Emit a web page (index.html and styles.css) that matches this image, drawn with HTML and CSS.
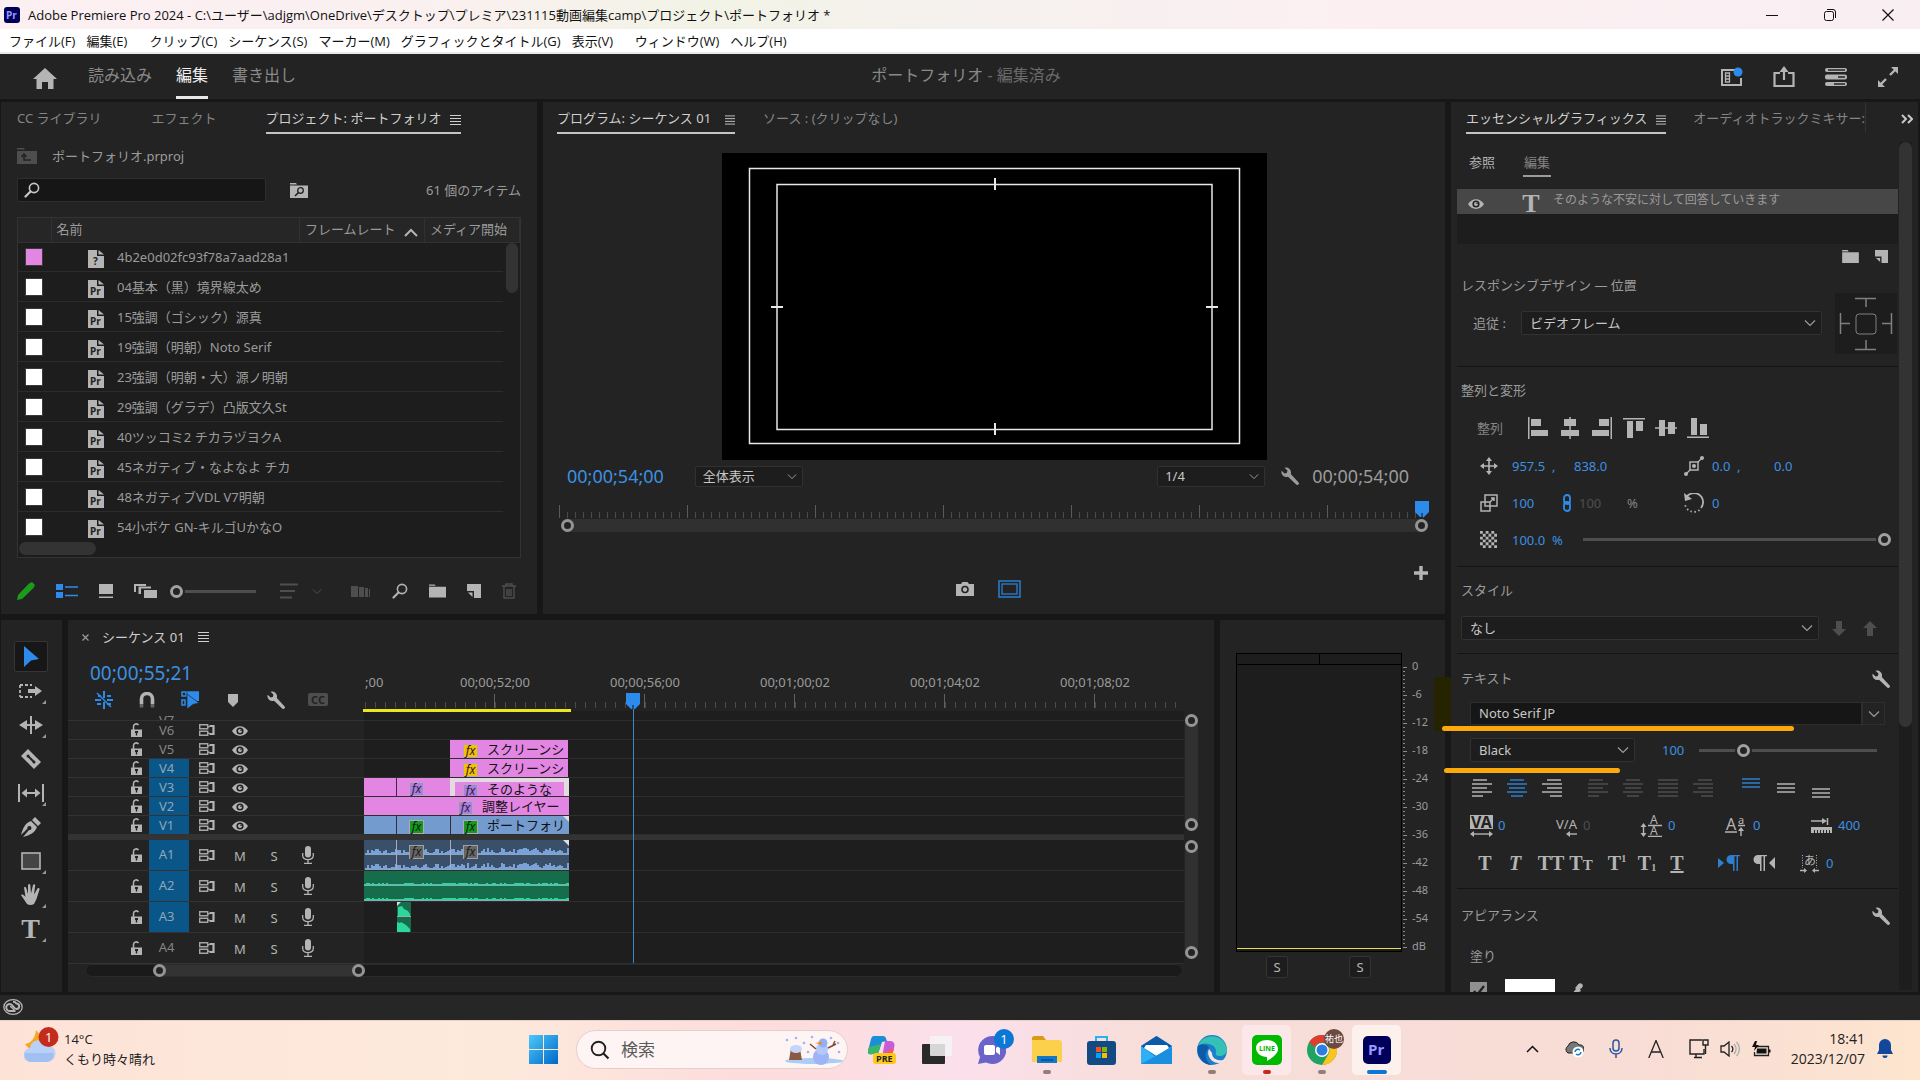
FILE: index.html
```html
<!DOCTYPE html>
<html lang="ja">
<head>
    <meta charset="UTF-8">
    <meta name="viewport" content="width=device-width, initial-scale=1.0">
    <title>Adobe Premiere Pro 2024</title>
    <link rel="stylesheet" href="styles.css">
</head>
<body>
    <!-- Icon set -->
    <svg class="icon_defs" width="0" height="0">
        <symbol id="i-menu" viewBox="0 0 11 10"><path d="M0 .5h11M0 3.5h11M0 6.5h11M0 9.5h11" stroke="currentColor"/></symbol>
        <symbol id="i-chev" viewBox="0 0 12 8"><path d="M1 1.500l5 5 5-5" fill="none" stroke="currentColor" stroke-width="1.200"/></symbol>
        <symbol id="i-search" viewBox="0 0 16 16"><circle cx="10" cy="6" r="4.600" fill="none" stroke="currentColor" stroke-width="1.600"/><path d="M6.500 9.500L1.500 14.500" stroke="currentColor" stroke-width="2.200" stroke-linecap="round"/></symbol>
        <symbol id="i-folder" viewBox="0 0 18 14"><path d="M0 0h6l1 1.500H0zM0 2.500h18V14H0z" fill="currentColor"/></symbol>
        <symbol id="i-new" viewBox="0 0 14 14"><path d="M0 0h14v14H7V7H0z" fill="currentColor"/><path d="M1 8.500h4.500V13z" fill="currentColor"/></symbol>
        <symbol id="i-file" viewBox="0 0 16 18"><path d="M0 0h9v6h7v12H0z" fill="#b4b4b4"/><path d="M10.500 0L16 4.500h-5.500z" fill="#b4b4b4"/></symbol>
        <symbol id="i-wrench" viewBox="0 0 18 18"><path d="M3.500.8a5 5 0 0 1 6.300 6.200l7.600 8.300a1.500 1.500 0 0 1-2.200 2.200L7 9.800A5 5 0 0 1 .6 3.800l3 2.600 2.200-.5.700-2.400z" fill="currentColor"/></symbol>
        <symbol id="i-eye" viewBox="0 0 16 10"><path d="M0 5C4-1.500 12-1.500 16 5 12 11.500 4 11.500 0 5z" fill="#b4b4b4"/><circle cx="8" cy="5" r="3.600" fill="#222"/><circle cx="8" cy="5" r="2" fill="#b4b4b4"/><circle cx="9" cy="4.300" r=".8" fill="#222"/></symbol>
        <symbol id="i-lock" viewBox="0 0 12 14"><path d="M2.500 7V3.500a2.700 2.700 0 0 1 5-1.300" fill="none" stroke="#b4b4b4" stroke-width="1.500"/><path d="M0 6.500h11V14H0z" fill="#b4b4b4"/><path d="M4 8h3v2H6.200v2.500H4.800V10H4z" fill="#222"/></symbol>
        <symbol id="i-sync" viewBox="0 0 16 12"><path d="M.7.700h8v4h-8zM.7 7.300h8v4h-8zM8.700 2.700h2M8.700 9.300h2" fill="none" stroke="#a6a6a6" stroke-width="1.400"/><path d="M10.500 2h4v8h-4" fill="none" stroke="#b4b4b4" stroke-width="2.200"/></symbol>
        <symbol id="i-mic" viewBox="0 0 12 18"><rect x="3" width="6" height="11.500" rx="3" fill="#b4b4b4"/><path d="M.7 7v2.500c0 5.500 10.600 5.500 10.600 0V7M6 14v3M2 17.300h8" fill="none" stroke="#b4b4b4" stroke-width="1.300"/></symbol>
        <symbol id="i-para" viewBox="0 0 16 16"><path d="M10 0H6a4.500 4.500 0 0 0 0 9h2v7h1.500V1.200h2V16H13V1.200h2V0z" fill="currentColor"/></symbol>
        <symbol id="i-lines" viewBox="0 0 20 18"><path d="M1 1h14M0 5h20M0 9h15M0 13h20M0 17h11" stroke="currentColor" stroke-width="1.300"/></symbol>
        <symbol id="i-linesC" viewBox="0 0 20 18"><path d="M3 1h14M0 5h20M2 9h16M0 13h20M4 17h12" stroke="currentColor" stroke-width="1.300"/></symbol>
        <symbol id="i-linesR" viewBox="0 0 20 18"><path d="M5 1h14M0 5h20M5 9h15M0 13h20M8 17h12" stroke="currentColor" stroke-width="1.300"/></symbol>
        <symbol id="i-linesJ" viewBox="0 0 20 18"><path d="M0 1h20M0 5h20M0 9h20M0 13h20M0 17h20" stroke="currentColor" stroke-width="1.300"/></symbol>
        <symbol id="i-three" viewBox="0 0 18 10"><path d="M0 1h18M0 5h18M0 9h18" stroke="currentColor" stroke-width="1.400"/></symbol>
    </svg>

    <!-- Title bar -->
    <header class="title_bar">
        <svg class="app_logo" width="16" height="16" viewBox="0 0 16 16"><rect width="16" height="16" rx="3" fill="#00005b"/><text x="2" y="12" font-size="10" font-weight="bold" font-family="Open Sans" fill="#9999ff">Pr</text></svg>
        <span class="title_text">Adobe Premiere Pro 2024 - C:\ユーザー\adjgm\OneDrive\デスクトップ\プレミア\231115動画編集camp\プロジェクト\ポートフォリオ *</span>
        <div class="win_buttons">
            <button aria-label="最小化"><svg width="12" height="12"><path d="M0 6.500h12" stroke="#111"/></svg></button>
            <button aria-label="元に戻す"><svg width="12" height="12" fill="none" stroke="#111"><rect x=".5" y="2.500" width="9" height="9" rx="2"/><path d="M3 .5h6a2.500 2.500 0 0 1 2.500 2.500v6"/></svg></button>
            <button aria-label="閉じる"><svg width="12" height="12"><path d="M.5.500l11 11M11.500.500l-11 11" stroke="#111" stroke-width="1.200"/></svg></button>
        </div>
    </header>
    <nav class="menu_bar">
        <button>ファイル(F)</button>
        <button>編集(E)</button>
        <button>クリップ(C)</button>
        <button>シーケンス(S)</button>
        <button>マーカー(M)</button>
        <button>グラフィックとタイトル(G)</button>
        <button>表示(V)</button>
        <button>ウィンドウ(W)</button>
        <button>ヘルプ(H)</button>
    </nav>

    <!-- Workspace header -->
    <div class="work_header">
        <div class="work_left">
            <button class="home" aria-label="ホーム"><svg width="24" height="21" viewBox="0 0 24 21"><path d="M12 0L0 11h3.500v10H9v-7h6v7h5.500V11H24z" fill="#b4b4b4"/></svg></button>
            <button>読み込み</button>
            <button class="active">編集</button>
            <button>書き出し</button>
        </div>
        <div class="work_title">ポートフォリオ<span> - 編集済み</span></div>
        <div class="work_right">
            <button aria-label="ワークスペース"><svg width="22" height="20" viewBox="0 0 22 20"><path d="M14 3H1v15h19V11" fill="none" stroke="#b4b4b4" stroke-width="2"/><path d="M4.500 6h4v9h-4zM4.500 9h4M4.500 12h4" fill="none" stroke="#b4b4b4" stroke-width="1.300"/><circle cx="17" cy="5" r="4.500" fill="#2d8ceb"/></svg></button>
            <button aria-label="クイック書き出し"><svg width="22" height="22" viewBox="0 0 22 22"><path d="M7 7H1.500v13h19V7H15" fill="none" stroke="#b4b4b4" stroke-width="2.200"/><path d="M11 14V4" stroke="#b4b4b4" stroke-width="2.200"/><path d="M6.500 6L11 0l4.500 6z" fill="#b4b4b4"/></svg></button>
            <button aria-label="進行状況"><svg width="22" height="18" viewBox="0 0 22 18"><g fill="#b4b4b4"><rect y="0" width="22" height="4" rx="2"/><rect y="6.500" width="22" height="5" rx="2"/><rect y="14" width="22" height="4" rx="2"/></g><path d="M3 2h17M13 9h7M9 16h11" stroke="#222" stroke-width="1.300"/></svg></button>
            <button aria-label="全画面"><svg width="22" height="22" viewBox="0 0 22 22"><path d="M13 9l6-6M9 13l-6 6" stroke="#b4b4b4" stroke-width="2.400"/><path d="M14 1h7v7zM1 14v7h7z" fill="#b4b4b4"/></svg></button>
        </div>
    </div>

    <main class="workspace">
        <div class="left_area">
            <div class="upper">
                <!-- Project panel -->
                <section class="panel project">
                    <div class="tabs">
                        <button class="tab tab_cc">CC ライブラリ</button>
                        <button class="tab tab_fx">エフェクト</button>
                        <button class="tab active">プロジェクト: ポートフォリオ<svg width="11" height="10"><use href="#i-menu"/></svg></button>
                    </div>
                    <div class="path_row">
                        <svg width="20" height="16" viewBox="0 0 20 16"><path d="M0 0h7l1 1.500H0zM0 3h20v13H0z" fill="#4e4e4e"/><path d="M7 6v6h7M4.500 9L7 6l2.500 3" fill="none" stroke="#232323" stroke-width="1.500"/></svg>
                        <span>ポートフォリオ.prproj</span>
                    </div>
                    <div class="find_row">
                        <label class="find_box"><svg width="16" height="16"><use href="#i-search"/></svg><input type="text" aria-label="検索"></label>
                        <button aria-label="検索ビン"><svg width="18" height="15" viewBox="0 0 18 15"><path d="M0 0h6l1 1.500H0zM0 2.500h18V15H0z" fill="#b4b4b4"/><circle cx="10.500" cy="7.500" r="2.800" fill="none" stroke="#222" stroke-width="1.300"/><path d="M8.500 9.500L5 13" stroke="#222" stroke-width="1.600"/></svg></button>
                        <span class="item_count">61 個のアイテム</span>
                    </div>
                    <div class="bin">
                        <table class="bin_table">
                            <thead>
                                <tr><th class="col_label"></th><th class="col_name">名前</th><th class="col_rate">フレームレート<svg width="14" height="9" viewBox="0 0 14 9"><path d="M1 8l6-6 6 6" fill="none" stroke="#b4b4b4" stroke-width="2"/></svg></th><th class="col_start">メディア開始</th></tr>
                            </thead>
                            <tbody>
                                <tr><td><i class="swatch pink"></i></td><td colspan="3"><span class="file"><svg width="16" height="18"><use href="#i-file"/><text x="5" y="15">?</text></svg>4b2e0d02fc93f78a7aad28a1</span></td></tr>
                                <tr><td><i class="swatch"></i></td><td colspan="3"><span class="file"><svg width="16" height="18"><use href="#i-file"/><text x="2" y="15">Pr</text></svg>04基本（黒）境界線太め</span></td></tr>
                                <tr><td><i class="swatch"></i></td><td colspan="3"><span class="file"><svg width="16" height="18"><use href="#i-file"/><text x="2" y="15">Pr</text></svg>15強調（ゴシック）源真</span></td></tr>
                                <tr><td><i class="swatch"></i></td><td colspan="3"><span class="file"><svg width="16" height="18"><use href="#i-file"/><text x="2" y="15">Pr</text></svg>19強調（明朝）Noto Serif</span></td></tr>
                                <tr><td><i class="swatch"></i></td><td colspan="3"><span class="file"><svg width="16" height="18"><use href="#i-file"/><text x="2" y="15">Pr</text></svg>23強調（明朝・大）源ノ明朝</span></td></tr>
                                <tr><td><i class="swatch"></i></td><td colspan="3"><span class="file"><svg width="16" height="18"><use href="#i-file"/><text x="2" y="15">Pr</text></svg>29強調（グラデ）凸版文久St</span></td></tr>
                                <tr><td><i class="swatch"></i></td><td colspan="3"><span class="file"><svg width="16" height="18"><use href="#i-file"/><text x="2" y="15">Pr</text></svg>40ツッコミ2 チカラヅヨクA</span></td></tr>
                                <tr><td><i class="swatch"></i></td><td colspan="3"><span class="file"><svg width="16" height="18"><use href="#i-file"/><text x="2" y="15">Pr</text></svg>45ネガティブ・なよなよ チカ</span></td></tr>
                                <tr><td><i class="swatch"></i></td><td colspan="3"><span class="file"><svg width="16" height="18"><use href="#i-file"/><text x="2" y="15">Pr</text></svg>48ネガティブVDL V7明朝</span></td></tr>
                                <tr><td><i class="swatch"></i></td><td colspan="3"><span class="file"><svg width="16" height="18"><use href="#i-file"/><text x="2" y="15">Pr</text></svg>54小ボケ GN-キルゴUかなO</span></td></tr>
                            </tbody>
                        </table>
                        <div class="bin_hscroll"><i></i></div>
                        <div class="bin_vscroll"></div>
                    </div>
                    <div class="bin_tools">
                        <button aria-label="書き込み可能"><svg width="18" height="18" viewBox="0 0 18 18"><path d="M12 1.500L15 0l3 3-1.500 3L5 17l-5 1 1-5z" fill="#1a9b1c"/></svg></button>
                        <button aria-label="リスト表示"><svg width="22" height="14" viewBox="0 0 22 14"><path d="M0 0h7v6H0zM0 8h7v6H0z" fill="#2d8ceb"/><path d="M9 3h13M9 11.500h13" stroke="#2d8ceb" stroke-width="1.500"/></svg></button>
                        <button aria-label="アイコン表示"><svg width="14" height="14" viewBox="0 0 14 14"><path d="M0 0h14v10H0zM0 12.500h14V14H0z" fill="#b4b4b4"/></svg></button>
                        <button aria-label="フリーフォーム"><svg width="23" height="14" viewBox="0 0 23 14"><path d="M0 0h12v2H2v6H0zM4.500 2.500H17v2H7V10H4.500zM10 6h13v8H10z" fill="#b4b4b4"/></svg></button>
                        <input class="bin_zoom" type="range" min="0" max="100" value="0" aria-label="ズーム">
                        <button class="sort" aria-label="並べ替え"><svg width="18" height="16" viewBox="0 0 18 16"><path d="M0 1.500h18M0 8h15M0 14.500h12" stroke="#4e4e4e" stroke-width="2"/></svg><svg class="sort_chev" width="10" height="7"><use href="#i-chev"/></svg></button>
                        <button aria-label="シーケンスへオート"><svg width="20" height="12" viewBox="0 0 20 12"><path d="M0 1h7v11H0zM8 2h5v10H8zM14 3h3v9h-3zM18 4h1v8h-1z" fill="#4e4e4e"/></svg></button>
                        <button aria-label="検索"><svg width="16" height="16"><use href="#i-search"/></svg></button>
                        <button aria-label="新規ビン"><svg width="17" height="14"><use href="#i-folder"/></svg></button>
                        <button aria-label="新規項目"><svg width="14" height="14"><use href="#i-new"/></svg></button>
                        <button aria-label="消去"><svg width="14" height="16" viewBox="0 0 14 16" fill="none" stroke="#4e4e4e" stroke-width="1.400"><path d="M0 3h14M4 3V1h6v2M2 3v12h10V3M5 6v7M7 6v7M9 6v7"/></svg></button>
                    </div>
                </section>

                <!-- Program monitor -->
                <section class="panel program">
                    <div class="tabs">
                        <button class="tab active">プログラム: シーケンス 01<svg width="10" height="10"><use href="#i-menu"/></svg></button>
                        <button class="tab">ソース : (クリップなし)</button>
                    </div>
                    <div class="monitor">
                        <svg width="545" height="307" viewBox="0 0 545 307"><rect width="545" height="307" fill="#000"/><g fill="none" stroke="#e8e8e8" stroke-width="1.500"><rect x="27.500" y="15.500" width="490" height="275"/><rect x="55" y="31.500" width="435" height="245"/><path d="M273 25v12M273 270v12M49 154h12M484 154h12" stroke-width="2"/></g></svg>
                    </div>
                    <div class="monitor_bar">
                        <span class="timecode blue">00;00;54;00</span>
                        <span class="drop zoom_level"><select aria-label="ズームレベル"><option>全体表示</option></select><svg width="10" height="7"><use href="#i-chev"/></svg></span>
                        <span class="drop resolution"><select aria-label="再生時の解像度"><option>1/4</option></select><svg width="10" height="7"><use href="#i-chev"/></svg></span>
                        <button class="set_btn" aria-label="設定"><svg width="18" height="18"><use href="#i-wrench"/></svg></button>
                        <span class="timecode">00;00;54;00</span>
                    </div>
                    <div class="mon_ruler"><svg class="playhead" width="14" height="16" viewBox="0 0 14 16"><path d="M0 0h14v11l-5 5H5l-5-5z" fill="#2d8ceb"/><path d="M7 12v4" stroke="#111"/></svg></div>
                    <div class="mon_scroll"><i class="ring"></i><i class="ring"></i></div>
                    <div class="mon_plus"><button aria-label="ボタンエディター"><svg width="14" height="14"><path d="M7 0v14M0 7h14" stroke="#b4b4b4" stroke-width="3.400"/></svg></button></div>
                    <div class="mon_tools">
                        <button aria-label="フレームを書き出し"><svg width="18" height="14" viewBox="0 0 18 14"><path d="M0 2h5l1.500-2h5L13 2h5v12H0z" fill="#b4b4b4"/><circle cx="9" cy="7.500" r="3" fill="none" stroke="#222" stroke-width="1.600"/></svg></button>
                        <button aria-label="セーフマージン"><svg width="23" height="18" viewBox="0 0 23 18" fill="none" stroke="#2a79c6"><rect x="1" y="1" width="21" height="16" stroke-width="1.600"/><rect x="4" y="4" width="15" height="10" stroke-width="1.400"/></svg></button>
                    </div>
                </section>
            </div>

            <div class="lower">
                <!-- Tools -->
                <section class="panel tools">
                    <button class="tool active" aria-label="選択"><svg width="16" height="21" viewBox="0 0 16 21"><path d="M1 0l15 13-8 1.500L1 21z" fill="#2d8ceb"/></svg></button>
                    <button class="tool more" aria-label="トラックの選択"><svg width="24" height="14" viewBox="0 0 24 14"><path d="M1 1h12M1 1v12M1 13h12" fill="none" stroke="#b4b4b4" stroke-width="1.800" stroke-dasharray="3 2"/><path d="M9 5h7V2l7 5-7 5V9H9z" fill="#b4b4b4"/></svg></button>
                    <button class="tool more" aria-label="リップル"><svg width="24" height="18" viewBox="0 0 24 18"><path d="M12 0v18" stroke="#b4b4b4" stroke-width="2"/><path d="M0 9l8-5v4h8V4l8 5-8 5v-4H8v4z" fill="#b4b4b4"/></svg></button>
                    <button class="tool" aria-label="レーザー"><svg width="20" height="20" viewBox="0 0 20 20"><path d="M7 0l13 13-7 7L0 7z" fill="#b4b4b4"/><path d="M7 7l6 6" stroke="#232323" stroke-width="2"/><circle cx="7" cy="7" r="1.500" fill="#232323"/><circle cx="13" cy="13" r="1.500" fill="#232323"/></svg></button>
                    <button class="tool more" aria-label="スリップ"><svg width="26" height="18" viewBox="0 0 26 18"><path d="M1 0v18M25 0v18" stroke="#b4b4b4" stroke-width="2"/><path d="M6 9h14" stroke="#b4b4b4" stroke-width="2"/><path d="M3.500 9L9 4.500v9zM22.500 9L17 4.500v9z" fill="#b4b4b4"/></svg></button>
                    <button class="tool" aria-label="ペン"><svg width="20" height="20" viewBox="0 0 20 20"><path d="M14 0l6 6-3 3-6-6zM10 4l6 6c-2 6-7 8-14 10l6-7a2 2 0 1 0-1.500-1.500L0 18C2 11 4 6 10 4z" fill="#b4b4b4"/></svg></button>
                    <button class="tool more" aria-label="長方形"><svg width="20" height="18" viewBox="0 0 20 18"><rect x="1" y="1" width="18" height="16" fill="#454545" stroke="#b4b4b4" stroke-width="1.600"/></svg></button>
                    <button class="tool more" aria-label="手のひら"><svg width="20" height="21" viewBox="0 0 20 21"><path d="M6 20C4 17 2 14 0 11c1.500-1 3 0 4.500 2L3 3.500c1.500-1 2 0 2.400 1L7 10V1c1-1.500 2-1 2.300 0L10 9.500 12 1c1-1.500 2.200-.8 2.200.5L13 10.500l3.500-6c1.200-1 2.200-.2 2 1L15.500 15 13 20c-2 1.300-5 1.300-7 0z" fill="#b4b4b4"/></svg></button>
                    <button class="tool more serif" aria-label="文字">T</button>
                </section>

                <!-- Timeline -->
                <section class="panel timeline">
                    <div class="seq_tab">
                        <button aria-label="閉じる"><svg width="7" height="7"><path d="M.5.500l6 6M6.500.500l-6 6" stroke="#9b9b9b" stroke-width="1.200"/></svg></button>
                        <span>シーケンス 01</span>
                        <svg width="11" height="10"><use href="#i-menu"/></svg>
                    </div>
                    <div class="seq_head">
                        <div class="seq_controls">
                            <span class="timecode large blue">00;00;55;21</span>
                            <div class="seq_icons">
                                <button aria-label="ネスト"><svg width="18" height="18" viewBox="0 0 18 18"><path d="M9 0v7M9 11v7M12 5h4M0 9h6M12 9h6M2 13h4M12 13h4M3 5h3" stroke="#2d8ceb" stroke-width="2"/><path d="M2 2l14 14" stroke="#2d8ceb" stroke-width="1.400"/></svg></button>
                                <button aria-label="スナップ"><svg width="16" height="16" viewBox="0 0 16 16"><path d="M2.500 12V7a5.500 5.500 0 0 1 11 0v5" fill="none" stroke="#b4b4b4" stroke-width="3.600"/><path d="M.7 12h3.600v3.500H.7zM11.700 12h3.600v3.500h-3.600z" fill="#666"/></svg></button>
                                <button aria-label="リンク選択"><svg width="18" height="18" viewBox="0 0 18 18"><path d="M1 1h4v4H1zM7 1h11v7H7zM1 9h3v5H1z" fill="none" stroke="#2d8ceb" stroke-width="1.500"/><path d="M7 1h11v9H7z" fill="#2d8ceb"/><path d="M6 3l12 9-6 1.500L6 18z" fill="#2d8ceb" stroke="#232323" stroke-width=".7"/></svg></button>
                                <button aria-label="マーカー"><svg width="10" height="13" viewBox="0 0 10 13"><path d="M0 0h10v8l-5 5-5-5z" fill="#b4b4b4"/></svg></button>
                                <button aria-label="表示設定"><svg width="18" height="18"><use href="#i-wrench"/></svg></button>
                                <button class="cc" aria-label="キャプション">CC</button>
                            </div>
                        </div>
                        <div class="seq_ruler">
                            <div class="labels"><span>;00</span><span>00;00;52;00</span><span>00;00;56;00</span><span>00;01;00;02</span><span>00;01;04;02</span><span>00;01;08;02</span></div>
                            <div class="render_bar"></div>
                            <div class="seq_playhead"><svg width="14" height="16" viewBox="0 0 14 16"><path d="M0 0h14v11l-5 5H5l-5-5z" fill="#2d8ceb"/><path d="M7 12v4" stroke="#111"/></svg></div>
                        </div>
                    </div>
                    <div class="seq_body">
                        <div class="tracks">
                            <div class="track v v_cut"><div class="head"><span class="lk"></span><span class="name">V7</span></div><div class="lane"></div></div>
                            <div class="track v"><div class="head"><svg class="lk" width="12" height="14"><use href="#i-lock"/></svg><button class="name">V6</button><svg width="16" height="12"><use href="#i-sync"/></svg><svg class="eye" width="16" height="10"><use href="#i-eye"/></svg></div><div class="lane"></div></div>
                            <div class="track v"><div class="head"><svg class="lk" width="12" height="14"><use href="#i-lock"/></svg><button class="name">V5</button><svg width="16" height="12"><use href="#i-sync"/></svg><svg class="eye" width="16" height="10"><use href="#i-eye"/></svg></div>
                                <div class="lane"><div class="clip pink" style="margin-left: 86px; width: 118px"><i class="fx yellow">fx</i>スクリーンシ</div></div></div>
                            <div class="track v"><div class="head"><svg class="lk" width="12" height="14"><use href="#i-lock"/></svg><button class="name on">V4</button><svg width="16" height="12"><use href="#i-sync"/></svg><svg class="eye" width="16" height="10"><use href="#i-eye"/></svg></div>
                                <div class="lane"><div class="clip pink" style="margin-left: 86px; width: 118px"><i class="fx yellow">fx</i>スクリーンシ</div></div></div>
                            <div class="track v"><div class="head"><svg class="lk" width="12" height="14"><use href="#i-lock"/></svg><button class="name on">V3</button><svg width="16" height="12"><use href="#i-sync"/></svg><svg class="eye" width="16" height="10"><use href="#i-eye"/></svg></div>
                                <div class="lane"><div class="clip pink" style="width: 32px"></div><div class="clip pink" style="width: 54px"><i class="fx">fx</i></div><div class="clip pink selected" style="width: 119px"><i class="fx">fx</i>そのような</div></div></div>
                            <div class="track v"><div class="head"><svg class="lk" width="12" height="14"><use href="#i-lock"/></svg><button class="name on">V2</button><svg width="16" height="12"><use href="#i-sync"/></svg><svg class="eye" width="16" height="10"><use href="#i-eye"/></svg></div>
                                <div class="lane"><div class="clip pink adjust" style="width: 205px"><i class="fx">fx</i>調整レイヤー</div></div></div>
                            <div class="track v"><div class="head"><svg class="lk" width="12" height="14"><use href="#i-lock"/></svg><button class="name on">V1</button><svg width="16" height="12"><use href="#i-sync"/></svg><svg class="eye" width="16" height="10"><use href="#i-eye"/></svg></div>
                                <div class="lane"><div class="clip video" style="width: 32px"></div><div class="clip video" style="width: 54px"><i class="fx green">fx</i></div><div class="clip video fold" style="width: 119px"><i class="fx green">fx</i>ポートフォリ</div></div></div>
                            <div class="divider"></div>
                            <div class="track a"><div class="head"><svg class="lk" width="12" height="14"><use href="#i-lock"/></svg><button class="name on">A1</button><svg width="16" height="12"><use href="#i-sync"/></svg><button class="mute">M</button><button class="solo">S</button><svg width="12" height="18"><use href="#i-mic"/></svg></div>
                                <div class="lane"><div class="clip audio" style="width: 32px"><svg class="wave" data-seed="3" data-max="5" width="33" height="31"></svg></div><div class="clip audio" style="width: 54px"><svg class="wave" data-seed="9" data-max="5" width="54" height="31"></svg><i class="fx gray">fx</i></div><div class="clip audio fold" style="width: 119px"><svg class="wave" data-seed="5" data-max="6" width="118" height="31"></svg><i class="fx gray">fx</i></div></div></div>
                            <div class="track a"><div class="head"><svg class="lk" width="12" height="14"><use href="#i-lock"/></svg><button class="name on">A2</button><svg width="16" height="12"><use href="#i-sync"/></svg><button class="mute">M</button><button class="solo">S</button><svg width="12" height="18"><use href="#i-mic"/></svg></div>
                                <div class="lane"><div class="clip music" style="width: 205px"><svg class="wave" data-seed="7" data-max="2" width="205" height="31"></svg></div></div></div>
                            <div class="track a"><div class="head"><svg class="lk" width="12" height="14"><use href="#i-lock"/></svg><button class="name on">A3</button><svg width="16" height="12"><use href="#i-sync"/></svg><button class="mute">M</button><button class="solo">S</button><svg width="12" height="18"><use href="#i-mic"/></svg></div>
                                <div class="lane"><div class="clip music" style="margin-left: 33px; width: 14px"><svg width="14" height="31"><path d="M0 0h4l-4 4z" fill="#ddd"/><path d="M1 14V5l4-1 2 3 4 2 2 3v2zM0 30V20l3 1 1-1 5 3 4 4v3z" fill="#2dd69b"/><path d="M0 14.500h14" stroke="#9ab"/></svg></div></div></div>
                            <div class="track a a_cut"><div class="head"><svg class="lk" width="12" height="14"><use href="#i-lock"/></svg><button class="name">A4</button><svg width="16" height="12"><use href="#i-sync"/></svg><button class="mute">M</button><button class="solo">S</button><svg width="12" height="18"><use href="#i-mic"/></svg></div><div class="lane"></div></div>
                        </div>
                        <div class="seq_vscroll">
                            <div class="vbar vbar_video"><i class="ring"></i><i class="ring"></i></div>
                            <div class="vbar vbar_audio"><i class="ring"></i><i class="ring"></i></div>
                        </div>
                    </div>
                    <div class="seq_hscroll"><div class="thumb"><i class="ring"></i><i class="ring"></i></div></div>
                </section>

                <!-- Audio meters -->
                <section class="panel meters">
                    <div class="meter_row">
                        <div class="meter_box"><div class="peak"><i></i><i></i></div><div class="level"></div></div>
                        <div class="meter_ticks"></div>
                        <div class="meter_scale"><span>0</span><span>-6</span><span>-12</span><span>-18</span><span>-24</span><span>-30</span><span>-36</span><span>-42</span><span>-48</span><span>-54</span><span>dB</span></div>
                    </div>
                    <div class="meter_solo"><button>S</button><button>S</button></div>
                </section>
            </div>
        </div>

        <!-- Essential graphics -->
        <section class="panel graphics">
            <div class="tabs">
                <button class="tab active">エッセンシャルグラフィックス<svg width="10" height="10"><use href="#i-menu"/></svg></button>
                <button class="tab tab_mixer">オーディオトラックミキサー:</button>
                <button class="overflow" aria-label="その他"><svg width="12" height="10" viewBox="0 0 12 10"><path d="M1 1l4 4-4 4M7 1l4 4-4 4" fill="none" stroke="#c8c8c8" stroke-width="2"/></svg></button>
            </div>
            <div class="eg_wrap">
                <div class="eg_body">
                    <div class="subtabs"><button>参照</button><button class="active">編集</button></div>
                    <div class="layers">
                        <div class="layer"><svg width="16" height="10"><use href="#i-eye"/></svg><b class="serif">T</b><span>そのような不安に対して回答していきます</span></div>
                    </div>
                    <div class="layer_tools">
                        <button aria-label="グループ"><svg width="17" height="13"><use href="#i-folder"/></svg></button>
                        <button aria-label="新規レイヤー"><svg width="13" height="13"><use href="#i-new"/></svg></button>
                    </div>

                    <div class="sec responsive">
                        <div class="responsive_left">
                            <h3>レスポンシブデザイン ― 位置</h3>
                            <div class="follow"><label for="follow">追従 :</label><span class="drop"><select id="follow"><option>ビデオフレーム</option></select><svg width="12" height="8"><use href="#i-chev"/></svg></span></div>
                        </div>
                        <svg class="pins" width="62" height="61" viewBox="0 0 62 61" fill="none" stroke="#808080" stroke-width="1.500"><rect width="62" height="61" fill="#1d1d1d" stroke="none"/><rect x="21" y="21" width="20" height="20" rx="3" stroke-width="1"/><path d="M20 5.500h21M31 6v8M20 56.500h21M31 56v-9M5.500 20v21M6 30.500h9M56.500 20v21M56 30.500h-9"/></svg>
                    </div>

                    <div class="sec transform">
                        <h3>整列と変形</h3>
                        <div class="row align_row">
                            <span class="lbl">整列</span>
                            <button aria-label="左揃え"><svg width="20" height="22" fill="#b4b4b4"><path d="M0 0h1.500v22H0zM3 2h10v7H3zM3 13h17v6H3z"/></svg></button>
                            <button aria-label="中央揃え"><svg width="18" height="22" fill="#b4b4b4"><path d="M8.300 0h1.500v22H8.300zM3 2h12v7H3zM0 13h18v6H0z"/></svg></button>
                            <button aria-label="右揃え"><svg width="20" height="22" fill="#b4b4b4"><path d="M18.500 0H20v22h-1.500zM7 2h10v7H7zM0 13h17v6H0z"/></svg></button>
                            <button aria-label="上揃え"><svg width="22" height="20" fill="#b4b4b4"><path d="M0 0h22v1.500H0zM4 3h6v17H4zM13 3h7v10h-7z"/></svg></button>
                            <button aria-label="垂直中央"><svg width="22" height="18" fill="#b4b4b4"><path d="M0 8.300h22v1.500H0zM4 1h6v16H4zM13 3h7v12h-7z"/></svg></button>
                            <button aria-label="下揃え"><svg width="22" height="20" fill="#b4b4b4"><path d="M0 18.500h22V20H0zM4 0h6v17H4zM13 6h7v11h-7z"/></svg></button>
                        </div>
                        <div class="row grid_row">
                            <svg width="18" height="18" viewBox="0 0 18 18"><path d="M9 2v14M2 9h14" stroke="#b4b4b4" stroke-width="1.600"/><path d="M9 0l3 4H6zM9 18l3-4H6zM0 9l4-3v6zM18 9l-4-3v6z" fill="#b4b4b4"/></svg>
                            <span class="num">957.5&nbsp; ,</span><i></i><span class="num">838.0</span><i></i>
                            <svg width="20" height="20" viewBox="0 0 20 20"><path d="M1.500 18.500l17-17" stroke="#b4b4b4" stroke-width="1.300"/><rect x="6" y="6" width="8" height="8" fill="#232323" stroke="#b4b4b4" stroke-width="1.500"/><circle cx="10" cy="10" r="2" fill="#b4b4b4"/><circle cx="2" cy="18" r="2" fill="#b4b4b4"/><circle cx="18" cy="2" r="2" fill="#b4b4b4"/></svg>
                            <span class="num">0.0&nbsp; ,</span><span class="num">0.0</span>
                        </div>
                        <div class="row grid_row">
                            <svg width="18" height="18" viewBox="0 0 18 18" fill="none" stroke="#b4b4b4" stroke-width="1.500"><path d="M5 1h12v11H5zM5 8H1v9h9v-5"/><path d="M5 8h5v4M9 9l5-5M11 4h3v3"/></svg>
                            <span class="num">100</span>
                            <svg width="8" height="18" viewBox="0 0 8 18" fill="none" stroke="#2d8ceb" stroke-width="1.800"><rect x="1" y="1" width="6" height="9" rx="3"/><rect x="1" y="8" width="6" height="9" rx="3"/></svg>
                            <span class="num dim">100</span><span class="lbl">%</span>
                            <svg width="20" height="20" viewBox="0 0 20 20" fill="none" stroke="#b4b4b4" stroke-width="1.800"><path d="M2 5a9 9 0 0 1 17 5 9 9 0 0 1-2 5"/><path d="M15.500 17A9 9 0 0 1 1 11" stroke-dasharray="1.500 2.500"/><path d="M0 0l1 8 7-2z" fill="#b4b4b4" stroke="none"/></svg>
                            <span class="num">0</span>
                        </div>
                        <div class="row opacity_row">
                            <svg width="17" height="17" viewBox="0 0 6 6" fill="#b4b4b4"><path d="M0 0h1v1H0zM2 0h1v1H2zM4 0h1v1H4zM1 1h1v1H1zM3 1h1v1H3zM5 1h1v1H5zM0 2h1v1H0zM2 2h1v1H2zM4 2h1v1H4zM1 3h1v1H1zM3 3h1v1H3zM5 3h1v1H5zM0 4h1v1H0zM2 4h1v1H2zM4 4h1v1H4zM1 5h1v1H1zM3 5h1v1H3zM5 5h1v1H5z"/></svg>
                            <span class="num">100.0&nbsp; %</span>
                            <input type="range" min="0" max="100" value="100" aria-label="不透明度">
                        </div>
                    </div>

                    <div class="sec style_sec">
                        <h3>スタイル</h3>
                        <div class="style_row">
                            <span class="drop"><select aria-label="スタイル"><option>なし</option></select><svg width="12" height="8"><use href="#i-chev"/></svg></span>
                            <button aria-label="下へ"><svg width="14" height="15"><path d="M4 0h6v8h4l-7 7-7-7h4z" fill="#4e4e4e"/></svg></button>
                            <button aria-label="上へ"><svg width="14" height="15"><path d="M4 15h6V7h4L7 0 0 7h4z" fill="#4e4e4e"/></svg></button>
                        </div>
                    </div>

                    <div class="sec text_sec">
                        <div class="sec_head"><h3>テキスト</h3><button aria-label="テキスト設定"><svg width="18" height="18"><use href="#i-wrench"/></svg></button></div>
                        <div class="font_row"><input type="text" value="Noto Serif JP" aria-label="フォント"><button aria-label="フォント一覧"><svg width="12" height="8"><use href="#i-chev"/></svg></button><i class="mark_block"></i><i class="mark mark_font"></i></div>
                        <div class="weight_row"><span class="drop"><select aria-label="フォントスタイル"><option>Black</option></select><svg width="12" height="8"><use href="#i-chev"/></svg></span><span class="num">100</span><input type="range" min="0" max="100" value="23" aria-label="フォントサイズ"><i class="mark mark_weight"></i></div>
                        <div class="row para_row">
                            <div><button aria-label="左"><svg width="20" height="18"><use href="#i-lines"/></svg></button><button class="on" aria-label="中央"><svg width="20" height="18"><use href="#i-linesC"/></svg></button><button aria-label="右"><svg width="20" height="18"><use href="#i-linesR"/></svg></button></div>
                            <div class="off"><button aria-label="均等左"><svg width="20" height="18"><use href="#i-lines"/></svg></button><button aria-label="均等中央"><svg width="20" height="18"><use href="#i-linesC"/></svg></button><button aria-label="均等"><svg width="20" height="18"><use href="#i-linesJ"/></svg></button><button aria-label="均等右"><svg width="20" height="18"><use href="#i-linesR"/></svg></button></div>
                            <div class="valign"><button class="on" aria-label="上"><svg width="18" height="10"><use href="#i-three"/></svg></button><button aria-label="中"><svg width="18" height="10"><use href="#i-three"/></svg></button><button aria-label="下"><svg width="18" height="10"><use href="#i-three"/></svg></button></div>
                        </div>
                        <div class="row space_row">
                            <div><svg width="23" height="22" viewBox="0 0 23 22"><rect width="23" height="14" fill="#b4b4b4"/><text x="1" y="13" font-size="16" font-weight="bold" fill="#222">VA</text><path d="M3 19h17" stroke="#b4b4b4" stroke-width="1.400"/><path d="M0 19l4-3v6zM23 19l-4-3v6z" fill="#b4b4b4"/></svg><span class="num">0</span></div>
                            <div><svg width="23" height="22" viewBox="0 0 23 22"><text x="1" y="14" font-size="13" fill="#b4b4b4">V/A</text><path d="M14 19h8" stroke="#b4b4b4" stroke-width="1.400"/><path d="M11 19l4-3v6z" fill="#b4b4b4"/></svg><span class="num dim">0</span></div>
                            <div><svg width="23" height="22" viewBox="0 0 23 22"><text x="10" y="9" font-size="12" fill="#b4b4b4">A</text><text x="10" y="20" font-size="12" fill="#b4b4b4">A</text><path d="M8 10.500h14M8 21.500h14M3.500 11v8" stroke="#b4b4b4" stroke-width="1.400"/><path d="M3.500 8l3 4h-6zM3.500 22l3-4h-6z" fill="#b4b4b4"/></svg><span class="num">0</span></div>
                            <div><svg width="23" height="22" viewBox="0 0 23 22"><text x="1" y="15" font-size="16" fill="#b4b4b4">A</text><text x="13" y="9" font-size="11" fill="#b4b4b4">a</text><path d="M0 17h12M13 10.500h7M16 13v8" stroke="#b4b4b4" stroke-width="1.400"/><path d="M16 12l3 4h-6z" fill="#b4b4b4"/></svg><span class="num">0</span></div>
                            <div><svg width="23" height="22" viewBox="0 0 23 22"><path d="M1 6h12M17.500 3v7" stroke="#b4b4b4" stroke-width="1.500"/><path d="M17 6l-5-3v6z" fill="#b4b4b4"/><path d="M1 12h21v6h-2v-3h-1v3h-2v-3h-1v3h-2v-3h-1v3h-2v-3h-1v3H8v-3H7v3H5v-3H4v3H1z" fill="#b4b4b4"/></svg><span class="num">400</span></div>
                        </div>
                        <div class="row faux_row">
                            <div><button class="serif"><b>T</b></button><button class="serif"><em>T</em></button></div>
                            <div><button class="serif">TT</button><button class="serif">T<small>T</small></button></div>
                            <div><button class="serif">T<sup>1</sup></button><button class="serif">T<sub>1</sub></button><button class="serif"><u>T</u></button></div>
                            <div class="dirs"><button class="on" aria-label="左から右"><svg width="22" height="16" viewBox="0 0 22 16"><path d="M0 3l6 5-6 5z" fill="currentColor"/><use href="#i-para" x="7" width="16" height="16"/></svg></button><button aria-label="右から左"><svg width="22" height="16" viewBox="0 0 22 16"><path d="M22 2l-6 6 6 6z" fill="currentColor"/><use href="#i-para" x="-1" width="16" height="16"/></svg></button></div>
                            <div class="tsume"><svg width="21" height="20" viewBox="0 0 21 20"><path d="M3.500 2v13M17.500 2v13" stroke="#b4b4b4" stroke-dasharray="1 1.500"/><text x="5" y="12" font-size="12" fill="#b4b4b4">あ</text><path d="M1 17.500h4M16 17.500h4" stroke="#b4b4b4" stroke-width="1.300"/><path d="M8 17.500l-3-2.500v5zM13 17.500l3-2.500v5z" fill="#b4b4b4"/></svg><span class="num">0</span></div>
                        </div>
                    </div>

                    <div class="sec appear_sec">
                        <div class="sec_head"><h3>アピアランス</h3><button aria-label="アピアランス設定"><svg width="18" height="18"><use href="#i-wrench"/></svg></button></div>
                        <div class="fill_label">塗り</div>
                        <div class="fill_row"><label class="check"><input type="checkbox" checked aria-label="塗り"><svg width="17" height="17" viewBox="0 0 17 17"><path d="M4 9l3 4 7-9" fill="none" stroke="#222" stroke-width="2.400"/></svg></label><button class="fill_color" aria-label="塗りの色"></button><svg width="14" height="16" viewBox="0 0 14 16"><path d="M7 4c2-3 4-5 6-3s0 4-2 5l1 2-2 1-5 6H2v-3l5-6-1-1z" fill="#b4b4b4"/></svg></div>
                    </div>
                </div>
                <div class="eg_scroll"><i></i></div>
            </div>
        </section>
    </main>

    <footer class="status_bar">
        <svg width="20" height="16" viewBox="0 0 20 16" fill="none" stroke="#b4b4b4"><ellipse cx="10" cy="8" rx="9.200" ry="7.300" stroke-width="1.300"/><path d="M12.500 12H7a3.500 3.500 0 0 1-.5-7c2 0 3 1.200 4 2.700s2 2.300 3 2.300a2.700 2.700 0 0 0 0-5.400c-.8-1.200-2-1.800-3.500-1.800" stroke-width="2"/><path d="M7 7.500c2 0 3 3 5 4" stroke-width="1.300"/></svg>
    </footer>

    <!-- Windows taskbar -->
    <footer class="taskbar">
        <div class="weather">
            <svg width="36" height="38" viewBox="0 0 36 38"><path d="M12 3C11 12 7 16 1 17c4 8 17 7 20-3z" fill="#f5a623"/><path d="M7 35a7 7 0 0 1-1-14 9 9 0 0 1 17-3 7.500 7.500 0 0 1 0 17z" fill="#b9d1f6"/><path d="M7 35a7 7 0 0 1-6-9h28a7 7 0 0 1-6 9z" fill="#9fc0f0"/><circle cx="24.500" cy="10" r="10" fill="#c42b1c"/><text x="21" y="15" font-size="13" fill="#fff">1</text></svg>
            <div><span class="temp">14°C</span><span>くもり時々晴れ</span></div>
        </div>
        <div class="apps">
            <button class="start" aria-label="スタート"><svg width="29" height="29" viewBox="0 0 29 29"><defs><linearGradient id="win" x1="0" y1="0" x2="1" y2="1"><stop offset="0" stop-color="#4cc9f9"/><stop offset="1" stop-color="#0067c8"/></linearGradient></defs><path d="M0 0h14v14H0zM15 0h14v14H15zM0 15h14v14H0zM15 15h14v14H15z" fill="url(#win)"/></svg></button>
            <label class="search"><svg width="20" height="20" viewBox="0 0 20 20"><circle cx="8.500" cy="8.500" r="6.800" fill="none" stroke="#222" stroke-width="1.900"/><path d="M13.500 13.500l5 5" stroke="#222" stroke-width="2.200"/></svg><input type="text" placeholder="検索" aria-label="検索">
                <svg width="60" height="30" viewBox="0 0 60 30"><ellipse cx="30" cy="26" rx="29" ry="3" fill="#a9cdf5"/><path d="M7 13l9 1 2 11H5z" fill="#8a5a44"/><ellipse cx="12" cy="14" rx="6" ry="4" fill="#c3d5fb"/><circle cx="37" cy="22" r="8" fill="#9db5f7"/><circle cx="38" cy="14" r="6" fill="#b5c8fb"/><circle cx="39" cy="8" r="4.500" fill="#8fb2f4"/><path d="M38 7l-7 1 7 2z" fill="#f08a24"/><path d="M32 14l-6-5M44 13l8-4M49 10l2-4" stroke="#7a4b36" stroke-width="1.500"/><g fill="#9fb4f2"><circle cx="3" cy="5" r="1.300"/><circle cx="12" cy="3" r="1.300"/><circle cx="20" cy="8" r="1.300"/><circle cx="28" cy="2" r="1.300"/><circle cx="47" cy="3" r="1.300"/><circle cx="54" cy="8" r="1.300"/><circle cx="55" cy="17" r="1.300"/><circle cx="24" cy="17" r="1.300"/></g></svg></label>
            <button class="app" aria-label="Copilot"><svg width="30" height="30" viewBox="0 0 30 30"><path d="M7 1h9c3 0 3 3 4 5l-5 1-4 12H4c-4 0-3-4-2-7l2-8c1-2 1-3 3-3z" fill="#1a8fd6"/><path d="M2 12l-1 4c-1 4 3 4 5 3h5l3-10z" fill="#3ab56b"/><path d="M18 6h5c5 0 5 4 4 7l-2 7c-1 3-3 4-7 4h-7c4 0 4-4 5-7z" fill="#c85cd8"/><path d="M22 14h5l-2 6c-1 3-3 4-7 4h-3z" fill="#f0596b"/><rect x="6" y="18" width="23" height="11" rx="3" fill="#ffc91a"/><text x="9" y="27" font-size="9" font-weight="bold" fill="#222">PRE</text></svg></button>
            <button class="app" aria-label="タスクビュー"><svg width="30" height="28" viewBox="0 0 30 28"><rect x="0" y="8" width="23" height="20" rx="1" fill="#2a2a2a"/><rect x="8" y="0" width="22" height="20" rx="1" fill="#f4f4f4" fill-opacity=".85"/></svg></button>
            <button class="app" aria-label="チャット"><svg width="28" height="28" viewBox="0 0 28 28"><path d="M14 0a14 14 0 1 1-6 26.500L0 28l2-7A14 14 0 0 1 14 0z" fill="#6a63c9"/><rect x="6" y="9" width="11" height="10" rx="2" fill="#fff"/><path d="M18 12l4-3v10l-4-3z" fill="#fff"/></svg><span class="badge">1</span></button>
            <button class="app run" aria-label="エクスプローラー"><svg width="30" height="28" viewBox="0 0 30 28"><path d="M0 2c0-1 1-2 2-2h9l3 4H0z" fill="#d99b16"/><path d="M0 4h28l2 2v20H0z" fill="#fcd04b"/><path d="M5 20h20v7H5z" fill="#1577c8"/><path d="M9 23h12v2H9z" fill="#0c58a0"/></svg></button>
            <button class="app" aria-label="ストア"><svg width="29" height="30" viewBox="0 0 29 30"><path d="M9 8V2h11v6" fill="none" stroke="#27b3ee" stroke-width="2"/><rect y="6" width="29" height="24" rx="3" fill="#134a83"/><path d="M9 12h5v5H9z" fill="#f25022"/><path d="M15 12h5v5h-5z" fill="#7fba00"/><path d="M9 18h5v5H9z" fill="#00a4ef"/><path d="M15 18h5v5h-5z" fill="#ffb900"/></svg></button>
            <button class="app" aria-label="メール"><svg width="31" height="28" viewBox="0 0 31 28"><path d="M15.500 0L31 10v18H0V10z" fill="#2eb0f5"/><path d="M15.500 0L31 10 15.500 21 0 10z" fill="#0f5aa8"/><path d="M5 9h21l2 3-12.500 8L3 12z" fill="#fff"/><path d="M0 28l31-17v17z" fill="#1a8fe0"/></svg></button>
            <button class="app run" aria-label="Edge"><svg width="30" height="30" viewBox="0 0 30 30"><circle cx="15" cy="15" r="15" fill="#1b7fcb"/><path d="M1 11A15 15 0 0 1 30 15c0 4-4 6-8 6-3 0-4-2-3-4 1-6-9-12-18-6z" fill="#35c1b5"/><path d="M12 14c-3 6 2 14 10 14 2 0 4-1 5-3-4 1-12 0-12-7z" fill="#f9e5e0"/><path d="M1 11c-2 9 4 19 14 19-6-2-9-12-3-17 0-3-7-5-11-2z" fill="#0d5aa8"/></svg></button>
            <button class="app run line_app" aria-label="LINE"><svg width="30" height="30" viewBox="0 0 30 30"><rect width="30" height="30" rx="5" fill="#00b900"/><path d="M15 5c6 0 11 4 11 9s-6 9-11 12v-4C9 22 4 18 4 13s5-8 11-8z" fill="#fff"/><text x="7" y="16" font-size="7" font-weight="bold" fill="#00b900">LINE</text></svg></button>
            <button class="app run" aria-label="Chrome"><svg width="30" height="30" viewBox="0 0 30 30"><circle cx="15" cy="15" r="15" fill="#1ea362"/><path d="M15 0a15 15 0 0 1 13 7.500H15A7.500 7.500 0 0 0 8 12L2 7.500A15 15 0 0 1 15 0z" fill="#e33b2e"/><path d="M28 7.500A15 15 0 0 1 15 30l7-12c1-4 0-8-4-10.500z" fill="#fcc31e"/><circle cx="15" cy="15" r="7" fill="#fff"/><circle cx="15" cy="15" r="5.500" fill="#2f7de1"/></svg><span class="badge person">祐也</span></button>
            <button class="app run pr_app" aria-label="Premiere Pro"><svg width="28" height="28" viewBox="0 0 28 28"><rect width="28" height="28" rx="5" fill="#00005b"/><text x="5" y="19" font-size="15" font-weight="bold" fill="#9999ff">Pr</text></svg></button>
        </div>
        <div class="tray">
            <svg width="13" height="8" viewBox="0 0 13 8"><path d="M1 7l5.500-5.500L12 7" fill="none" stroke="#111" stroke-width="1.500"/></svg>
            <svg width="20" height="18" viewBox="0 0 20 18"><path d="M4 13a4 4 0 0 1 0-7 6 6 0 0 1 11-1 4 4 0 0 1 2 8z" fill="#777" stroke="#222"/><circle cx="14" cy="12" r="5.500" fill="#fff"/><path d="M11 12a3 3 0 0 1 5-2M17 12a3 3 0 0 1-5 2" fill="none" stroke="#1577c8" stroke-width="1.500"/></svg>
            <svg width="14" height="20" viewBox="0 0 14 20" fill="none" stroke="#2b57a0" stroke-width="1.500"><rect x="4" y="1" width="6" height="11" rx="3"/><path d="M1 9c0 8 12 8 12 0M7 15v4"/></svg>
            <svg width="16" height="18" viewBox="0 0 16 18"><path d="M.8 18L8 .5 15.200 18M3.500 12h9" fill="none" stroke="#222" stroke-width="1.300"/></svg>
            <span class="tray_sys"><svg width="20" height="20" viewBox="0 0 20 20" fill="none" stroke="#222" stroke-width="1.400"><path d="M13 1H1v14h14V10M5 18.500h8M7 15v3"/><path d="M14 1h5v5h-5zM16.500 6v9"/></svg><svg width="20" height="16" viewBox="0 0 20 16" fill="none" stroke="#222" stroke-width="1.300"><path d="M1 5h3l5-4v14l-5-4H1z"/><path d="M11.500 5a4 4 0 0 1 0 6"/><path d="M14 3a7 7 0 0 1 0 10M16.500 1a10 10 0 0 1 0 14" stroke="#aaa"/></svg><svg width="20" height="16" viewBox="0 0 20 16"><path d="M5 5.500h12.500v9H3.500V11" fill="none" stroke="#222" stroke-width="1.300"/><path d="M6 7.500h9.500v5H5.500zM18 8.500h1.500v3H18zM4 0L1 6h3l-1 4 5-6H5l1-4z" fill="#111"/></svg></span>
            <div class="clock"><span>18:41</span><span>2023/12/07</span></div>
            <svg width="16" height="19" viewBox="0 0 16 19"><path d="M8 0a6 6 0 0 0-6 6v5l-2 4h16l-2-4V6a6 6 0 0 0-6-6zM5.500 16.500h5a2.500 2.500 0 0 1-5 0z" fill="#12479c"/></svg>
        </div>
    </footer>
    <script src="script.js"></script>
</body>
</html>
```
FILE: styles.css
```css
* {
    margin: 0;
    padding: 0;
    box-sizing: border-box;
}

body {
    display: flex;
    flex-direction: column;
    height: 100vh;
    overflow: hidden;
    background: #171717;
    color: #9b9b9b;
    font-family: "Noto Sans", "Noto Sans CJK JP", sans-serif;
    font-size: 13px;
    line-height: 20px;
    white-space: nowrap;
}

button, input, select {
    font: inherit;
    color: inherit;
    background: none;
    border: none;
    outline: none;
    white-space: nowrap;
}

button {
    display: inline-flex;
    align-items: center;
    justify-content: center;
}

svg {
    display: block;
    flex: none;
}

i {
    display: block;
    font-style: normal;
}

.icon_defs {
    position: absolute;
}

/* Title bar and menu */
.title_bar {
    display: flex;
    align-items: center;
    height: 29px;
    flex: none;
    padding-left: 4px;
    background: linear-gradient(90deg, #fbeff2, #fbf0f0 22%, #f2f3e6 36%, #f5f1ee 50%, #fbeff2 70%, #f9eef1);
    color: #111;
    font-family: "Open Sans", "Noto Sans CJK JP", sans-serif;
}

.title_text {
    margin-left: 8px;
}

.win_buttons {
    display: flex;
    margin-left: auto;
    margin-right: 3px;
}

.win_buttons button {
    width: 58px;
    height: 29px;
}

.menu_bar {
    display: flex;
    gap: 11px;
    height: 25px;
    flex: none;
    padding-left: 9px;
    background: #fff;
    border-bottom: 2px solid #e9e9e9;
    color: #111;
    font-family: "Open Sans", "Noto Sans CJK JP", sans-serif;
}

.menu_bar button {
    min-width: 52px;
    justify-content: flex-start;
}

/* Workspace header */
.work_header {
    display: flex;
    height: 45px;
    flex: none;
    background: #232323;
    font-size: 16px;
}

.work_left, .work_right {
    display: flex;
    flex: 1;
}

.work_left {
    padding-left: 33px;
    gap: 24px;
    color: #8a8a8a;
}

.work_left button {
    padding-bottom: 1px;
    border-bottom: 3px solid transparent;
}

.work_left .home {
    padding: 6px 0 0;
    margin-right: 7px;
}

.work_left .active {
    color: #f0f0f0;
    border-color: #e8e8e8;
}

.work_title {
    line-height: 42px;
    color: #8a8a8a;
}

.work_title span {
    color: #6a6a6a;
}

.work_right {
    justify-content: flex-end;
    gap: 30px;
    padding-right: 21px;
}

/* Panels */
.workspace {
    display: flex;
    flex: 1;
    gap: 6px;
    min-height: 0;
    padding: 3px 2px 3px 1px;
}

.left_area {
    display: flex;
    flex: 1;
    flex-direction: column;
    gap: 6px;
    min-width: 0;
}

.upper, .lower {
    display: flex;
    gap: 6px;
}

.upper {
    height: 512px;
}

.lower {
    flex: 1;
    min-height: 0;
}

.panel {
    background: #232323;
}

.tabs {
    display: flex;
    height: 32px;
}

.tab {
    gap: 9px;
    padding: 2px 0 0;
    border-bottom: 2px solid transparent;
    color: #858585;
}

.tab.active {
    color: #cfcfcf;
    border-color: #c4c4c4;
}

.tab svg {
    margin-top: 4px;
}

.ring {
    width: 13px;
    height: 13px;
    flex: none;
    border: 3px solid #959595;
    border-radius: 50%;
    background: #232323;
}

.timecode {
    font-size: 18px;
}

.timecode.large {
    font-size: 19px;
}

.blue, .num {
    color: #3d90e0;
}

/* Drop-downs */
.drop {
    position: relative;
    display: block;
}

.drop select {
    display: block;
    width: 100%;
    height: 24px;
    padding-left: 8px;
    appearance: none;
    background: #1d1d1d;
    border: 1px solid #313131;
    border-radius: 2px;
    color: #c8c8c8;
}

.drop svg {
    position: absolute;
    right: 6px;
    top: 8px;
    pointer-events: none;
}

/* Sliders */
input[type="range"] {
    height: 14px;
    appearance: none;
    background: linear-gradient(#4e4e4e, #4e4e4e) center / 100% 3px no-repeat;
}

input[type="range"]::-webkit-slider-thumb {
    width: 13px;
    height: 13px;
    appearance: none;
    border: 3px solid #a0a0a0;
    border-radius: 50%;
    background: #232323;
    box-shadow: 0 0 0 2px #232323;
}

/* Project panel */
.project {
    width: 536px;
    flex: none;
    padding: 0 16px;
}

.tab_cc {
    margin-right: 50px;
}

.tab_fx {
    margin-right: 49px;
}

.path_row {
    display: flex;
    align-items: center;
    gap: 15px;
    height: 44px;
}

.find_row {
    display: flex;
    align-items: center;
    height: 24px;
}

.find_box {
    display: flex;
    align-items: center;
    width: 249px;
    height: 24px;
    margin-right: 24px;
    padding-left: 6px;
    background: #161616;
    border: 1px solid #2e2e2e;
    border-radius: 2px;
    color: #c8c8c8;
}

.item_count {
    margin-left: auto;
}

.find_box input {
    flex: 1;
    min-width: 0;
}

.bin {
    position: relative;
    height: 341px;
    margin-top: 15px;
    border: 1px solid #333;
    background: #1d1d1d;
}

.bin_table {
    width: 100%;
    table-layout: fixed;
    border-collapse: collapse;
}

.bin_table th {
    height: 24px;
    padding: 0 0 2px 5px;
    text-align: left;
    font-weight: normal;
    line-height: 18px;
    background: #262626;
    border-right: 1px solid #313131;
    border-bottom: 1px solid #313131;
}

.bin_table th svg {
    display: inline-block;
    margin-left: 8px;
    vertical-align: -3px;
}

.bin_table .col_label { width: 33px; }
.bin_table .col_rate { width: 125px; }
.bin_table .col_start { width: 95px; }

.bin_table td {
    height: 30px;
    background: linear-gradient(#2c2c2c, #2c2c2c) left bottom / calc(100% - 17px) 1px no-repeat;
}

.bin_table td:first-child {
    background-size: 100% 1px;
}

.bin_table tr:last-child td {
    background: none;
}

.swatch {
    width: 18px;
    height: 18px;
    margin-left: 7px;
    background: #fff;
    border: 1px solid #3a3a3a;
}

.swatch.pink {
    background: #e386e3;
}

.file {
    display: flex;
    align-items: center;
    gap: 13px;
    margin-left: 37px;
    line-height: 18px;
}

.file svg {
    margin-top: 3px;
}

.file text {
    font-size: 10px;
    font-weight: bold;
    fill: #222;
}

.bin_hscroll i {
    width: 77px;
    height: 13px;
    margin-left: 1px;
    border-radius: 7px;
    background: #333;
}

.bin_vscroll {
    position: absolute;
    top: 25px;
    right: 2px;
    width: 12px;
    height: 50px;
    border-radius: 6px;
    background: #333;
}

.bin_tools {
    display: flex;
    align-items: center;
    justify-content: space-between;
    height: 66px;
    padding-right: 5px;
    color: #b4b4b4;
}

.bin_tools .bin_zoom {
    width: 86px;
    margin-left: -8px;
    margin-right: 4px;
}

.bin_tools .sort {
    gap: 14px;
    margin-right: 8px;
}

.sort_chev {
    color: #4e4e4e;
}

/* Program monitor */
.program {
    flex: 1;
    min-width: 0;
    padding: 0 17px 0 14px;
}

.program .tabs {
    gap: 28px;
}

.program .tab {
    gap: 14px;
}

.monitor {
    display: flex;
    justify-content: center;
    padding: 19px 0 0 3px;
}

.monitor_bar {
    display: flex;
    align-items: center;
    height: 32px;
    padding: 0 19px 0 10px;
}

.zoom_level, .resolution {
    width: 108px;
}

.zoom_level {
    margin-left: 31px;
}

.resolution {
    margin-left: auto;
}

.monitor_bar select {
    height: 21px;
    padding-left: 7px;
    line-height: 18px;
}

.monitor_bar .drop svg {
    top: 7px;
}

.set_btn {
    margin: 0 13px 0 16px;
}

.mon_ruler {
    position: relative;
    height: 26px;
    margin: 0 0 0 2px;
    background:
        repeating-linear-gradient(90deg, #5a5a5a 0 1px, transparent 1px 128px) left bottom / 100% 13px no-repeat,
        repeating-linear-gradient(90deg, #4a4a4a 0 1px, transparent 1px 8px) left bottom / 100% 6px no-repeat;
}

.mon_ruler .playhead {
    position: absolute;
    right: -1px;
    top: 9px;
}

.mon_scroll {
    display: flex;
    align-items: center;
    justify-content: space-between;
    height: 13px;
    margin: 1px 0 0 4px;
    border-radius: 7px;
    background: #303030;
}

.mon_plus {
    display: flex;
    justify-content: flex-end;
    margin-top: 34px;
}

.mon_tools {
    display: flex;
    justify-content: center;
    gap: 24px;
    padding-right: 8px;
}

/* Tools */
.tools {
    display: flex;
    flex-direction: column;
    align-items: center;
    gap: 3px;
    width: 61px;
    flex: none;
    padding: 21px 2px 0 0;
}

.tool {
    position: relative;
    width: 34px;
    height: 31px;
    flex: none;
}

.tool.active {
    background: #171717;
    border: 1px solid #353535;
    border-radius: 2px;
}

.tool.more::after {
    content: "";
    position: absolute;
    right: 2px;
    bottom: 2px;
    border: 2px solid transparent;
    border-right-color: #999;
    border-bottom-color: #999;
}

.serif {
    font-family: "Liberation Serif", serif;
    color: #b4b4b4;
}

.tool.serif {
    font-size: 28px;
    font-weight: bold;
}

/* Timeline */
.timeline {
    display: flex;
    flex: 1;
    flex-direction: column;
    min-width: 0;
}

.seq_tab {
    display: flex;
    align-items: center;
    gap: 13px;
    height: 34px;
    padding-left: 14px;
    color: #cfcfcf;
}

.seq_head {
    display: flex;
    height: 57px;
}

.seq_controls {
    width: 296px;
    flex: none;
    padding: 9px 0 0 22px;
}

.seq_icons {
    display: flex;
    gap: 19px;
    margin-top: 3px;
    padding-left: 2px;
    color: #b4b4b4;
}

.seq_icons button {
    width: 24px;
    height: 24px;
}

.seq_icons .cc {
    width: 20px;
    height: 13px;
    margin: 5px 0 0 1px;
    border-radius: 2px;
    background: #4e4e4e;
    color: #232323;
    font-size: 11px;
    font-weight: bold;
}

.seq_ruler {
    position: relative;
    flex: 1;
    min-width: 0;
    margin-right: 30px;
    background:
        linear-gradient(90deg, #232323 1px, transparent 1px),
        repeating-linear-gradient(90deg, transparent 0 130px, #606060 130px 131px, transparent 131px 150px) left 40px / 100% 14px no-repeat,
        repeating-linear-gradient(90deg, #4a4a4a 0 1px, transparent 1px 10px) 1px 48px / 100% 6px no-repeat;
}

.seq_ruler .labels {
    display: flex;
    padding-top: 18px;
    line-height: 20px;
    overflow: hidden;
}

.labels span {
    width: 150px;
    flex: none;
}

.labels span:first-child {
    width: 96px;
    padding-left: 1px;
}

.render_bar {
    position: absolute;
    left: -1px;
    bottom: -1px;
    width: 208px;
    height: 3px;
    background: #ece71c;
}

.seq_playhead {
    position: absolute;
    left: 262px;
    top: 39px;
    width: 14px;
    height: 270px;
    z-index: 2;
    background: linear-gradient(#3a86cf, #3a86cf) center / 1px 100% no-repeat;
}

.seq_body {
    display: flex;
    flex: none;
}

.tracks {
    flex: 1;
    min-width: 0;
}

.track {
    display: flex;
}

.head {
    display: flex;
    align-items: center;
    width: 296px;
    flex: none;
    padding-left: 63px;
    border-bottom: 1px solid #333;
}

.lane {
    display: flex;
    flex: 1;
    min-width: 0;
    background: #1e1e1e;
    border-bottom: 1px solid #2e2e2e;
}

.track.v { height: 19px; }
.track.v_cut { height: 10px; overflow: hidden; }
.track.a { height: 31px; }
.track.a_cut { height: 31px; }

.v_cut .head {
    align-items: flex-start;
}

.v_cut .name {
    height: 9px;
    overflow: hidden;
}

.lk {
    width: 12px;
    margin-right: 6px;
}

.name {
    width: 40px;
    height: 100%;
    margin-right: 10px;
    padding-right: 5px;
    text-align: center;
    line-height: 18px;
    color: #858585;
}

.name.on {
    background: #0a5688;
    color: #8fa6b5;
}

.a .name {
    padding-bottom: 3px;
}

.eye, .mute {
    margin-left: 17px;
}

.eye {
    margin-top: 2px;
}

.mute, .solo {
    width: 16px;
    padding-top: 2px;
    color: #b4b4b4;
}

.solo {
    margin: 0 20px 0 18px;
}

.divider {
    height: 5px;
    background: #333;
}

/* Clips */
.clip {
    position: relative;
    display: flex;
    align-items: center;
    height: 18px;
    flex: none;
    gap: 9px;
    padding-left: 12px;
    overflow: hidden;
    color: #111;
    line-height: 18px;
    border-left: 1px solid #3a2a3a;
}

.clip.pink { background: #e386e3; }
.clip.video { background: #739bcd; }
.clip.audio { background: #3a4f69; color: #7ba2d8; border-color: #aab; }
.clip.music { background: #156d4b; color: #2dd69b; border: none; padding: 0; }
.clip.adjust { padding-left: 94px; border: none; }

.lane .clip:first-child {
    border-color: transparent;
}

.clip.selected {
    border: solid #e0dce0;
    border-width: 4px 5px 0;
    padding-left: 8px;
    line-height: 14px;
}

.clip.audio, .clip.music {
    height: 30px;
    align-items: flex-start;
}

.fold::after {
    content: "";
    position: absolute;
    right: 0;
    top: 0;
    border: 3px solid #ddd;
    border-left-color: transparent;
    border-bottom-color: transparent;
}

.wave {
    position: absolute;
    left: 0;
    top: 0;
}

.fx {
    position: relative;
    width: 15px;
    height: 14px;
    flex: none;
    margin-top: 3px;
    background: #ac80dc;
    border: 1px solid #b8a3c4;
    color: #2c1c3c;
    font: italic 12px/11px "Noto Sans", sans-serif;
    text-align: center;
}

.fx.yellow { background: #f6c000; }
.fx.green { background: #189a18; color: #022; }
.fx.gray { background: #666; border-color: #a0a0a0; color: #1a1a1a; margin-top: 5px; }

.seq_vscroll {
    width: 30px;
    padding: 0 0 0 1px;
}

.vbar {
    display: flex;
    flex-direction: column;
    justify-content: space-between;
    width: 13px;
    border-radius: 7px;
    background: #303030;
}

.vbar_video {
    height: 117px;
    margin-top: 3px;
}

.vbar_audio {
    height: 119px;
    margin-top: 9px;
}

.seq_hscroll {
    height: 13px;
    margin: 0 31px 0 17px;
    border: 1px solid #2a2a2a;
    border-radius: 7px;
    background: #1a1a1a;
}

.seq_hscroll .thumb {
    display: flex;
    align-items: center;
    justify-content: space-between;
    width: 212px;
    height: 11px;
    margin-left: 67px;
    border-radius: 7px;
    background: #333;
}

/* Audio meters */
.meters {
    width: 225px;
    flex: none;
    padding: 33px 0 0 16px;
}

.meter_row {
    display: flex;
    height: 299px;
}

.meter_box {
    display: flex;
    flex-direction: column;
    width: 166px;
    border: 1px solid #000;
    background: #1d1d1d;
}

.peak {
    display: flex;
    height: 11px;
    border-bottom: 1px solid #000;
}

.peak i {
    flex: 1;
}

.peak i:first-child {
    border-right: 1px solid #000;
}

.level {
    flex: 1;
    border-bottom: 1px solid #e6dc50;
    margin-bottom: 2px;
}

.meter_ticks {
    width: 4px;
    height: 283px;
    margin: 14px 5px 0 1px;
    background:
        repeating-linear-gradient(#8a8a8a 0 1px, transparent 1px 28px) left top / 4px 100% no-repeat,
        repeating-linear-gradient(#8a8a8a 0 1px, transparent 1px 4px) left top / 2px 100% no-repeat;
}

.meter_scale span {
    display: block;
    height: 28px;
    padding-top: 3px;
    font-size: 11px;
    line-height: 20px;
}

.meter_solo {
    display: flex;
    gap: 61px;
    padding: 4px 0 0 30px;
}

.meter_solo button {
    width: 22px;
    height: 22px;
    border: 1px solid #333;
    border-radius: 2px;
    background: #1d1d1d;
    color: #b4b4b4;
}

/* Essential graphics */
.graphics {
    display: flex;
    flex-direction: column;
    width: 467px;
    flex: none;
    padding-left: 6px;
}

.graphics .tabs {
    padding: 0 5px 0 9px;
}

.tab_mixer {
    margin-left: 27px;
    border-right: 1px solid #333;
}

.overflow {
    margin-left: auto;
    padding-top: 2px;
}

.eg_wrap {
    display: flex;
    flex: 1;
    min-height: 0;
    gap: 1px;
}

.eg_body {
    flex: 1;
    min-width: 0;
    clip-path: inset(0 0 0 -30px);
}

.eg_scroll {
    width: 13px;
    margin: 8px 6px 2px 0;
    background: #1d1d1d;
}

.eg_scroll i {
    height: 585px;
    border-radius: 7px;
    background: #333;
}

.subtabs {
    display: flex;
    gap: 27px;
    margin: 16px 0 12px 11px;
}

.subtabs button {
    height: 27px;
    padding: 0 1px 2px 1px;
    border-bottom: 2px solid transparent;
    color: #b4b4b4;
}

.subtabs .active {
    color: #858585;
    border-color: #9b9b9b;
}

.layers {
    height: 55px;
    background: #1d1d1d;
}

.layer {
    display: flex;
    align-items: center;
    height: 25px;
    padding-left: 11px;
    background: #474747;
    font-size: 12px;
    color: #9b9b9b;
}

.layer svg {
    margin-top: 5px;
}

.layer b {
    width: 18px;
    margin: 4px 13px 0 38px;
    font-size: 26px;
    text-align: center;
}

.layer span {
    padding-bottom: 4px;
}

.layer_tools {
    display: flex;
    justify-content: flex-end;
    gap: 16px;
    height: 25px;
    padding-right: 10px;
    color: #b4b4b4;
}

.sec {
    border-bottom: 1px solid #141414;
}

.sec h3 {
    padding: 0 0 2px 4px;
    font-size: 13px;
    font-weight: normal;
    line-height: 18px;
}

.responsive {
    display: flex;
    align-items: flex-end;
    gap: 13px;
    padding: 7px 1px 12px 0;
}

.responsive_left {
    flex: 1;
    height: 78px;
}

.responsive_left h3 {
    margin-bottom: 15px;
}

.follow {
    display: flex;
    align-items: center;
    justify-content: space-between;
    padding-left: 16px;
}

.follow .drop {
    width: 301px;
}

.transform {
    padding: 14px 0 8px;
}

.transform h3 {
    margin-bottom: 9px;
}

.row {
    display: flex;
    align-items: center;
    height: 37px;
    padding-left: 20px;
}

.row .lbl {
    color: #858585;
}

.row .dim {
    color: #4e4e4e;
}

.align_row {
    gap: 8px;
    padding-bottom: 1px;
}

.align_row .lbl {
    width: 41px;
}

.align_row button {
    width: 24px;
}

.grid_row {
    display: grid;
    grid-template-columns: 32px 51px 11px 53px 57px 28px 62px auto;
    padding-left: 23px;
}

.grid_row .dim {
    padding-left: 5px;
}

.opacity_row {
    padding-left: 23px;
}

.opacity_row .num {
    width: 71px;
    margin-left: 15px;
}

.opacity_row input {
    flex: 1;
    margin-right: 7px;
}

.style_sec {
    padding: 14px 0 13px;
}

.style_row {
    display: flex;
    align-items: center;
    gap: 17px;
    margin-top: 15px;
    padding: 0 21px 0 4px;
}

.style_row .drop {
    flex: 1;
    margin-right: -4px;
}

.sec_head {
    display: flex;
    align-items: center;
    justify-content: space-between;
    height: 20px;
    padding-right: 8px;
}

.text_sec {
    padding: 15px 0 7px;
}

.sec_head button {
    color: #b4b4b4;
}

.font_row, .weight_row {
    position: relative;
    display: flex;
    align-items: center;
    padding-left: 13px;
}

.font_row {
    height: 23px;
    margin: 13px 13px 13px 0;
}

.font_row input {
    flex: 1;
    height: 23px;
    padding: 0 0 2px 8px;
    background: #161616;
    border: 1px solid #2e2e2e;
    color: #c8c8c8;
}

.font_row button {
    width: 23px;
    height: 23px;
    border: 1px solid #2e2e2e;
}

.weight_row .drop {
    width: 165px;
}

.weight_row .num {
    width: 37px;
    margin-left: 27px;
}

.weight_row input {
    width: 178px;
}

/* Highlighter strokes over the font fields */
.mark {
    position: absolute;
    height: 5px;
    border-radius: 3px;
    background: #fca90b;
}

.mark_font {
    left: -15px;
    top: 24px;
    width: 352px;
}

.mark_weight {
    left: -13px;
    top: 30px;
    width: 176px;
}

.mark_block {
    position: absolute;
    left: -23px;
    top: -25px;
    width: 17px;
    height: 54px;
    background: #262400;
}

.para_row {
    height: 38px;
    margin-top: 7px;
    padding-left: 13px;
    color: #b4b4b4;
}

.row .on {
    color: #2f7fce;
}

.para_row div {
    display: flex;
    gap: 11px;
    margin-right: 22px;
}

.para_row button {
    width: 24px;
    height: 20px;
}

.para_row .off {
    margin-right: 24px;
    color: #4e4e4e;
}

.valign button:first-child { align-items: flex-start; }
.valign button:last-child { align-items: flex-end; }

.space_row {
    padding-left: 13px;
}

.space_row div {
    display: flex;
    gap: 5px;
    width: 85px;
}

.faux_row {
    padding-left: 16px;
    color: #b4b4b4;
}

.faux_row div {
    display: flex;
    gap: 6px;
    margin-right: 12px;
}

.faux_row button {
    width: 24px;
    height: 20px;
}

.faux_row .serif {
    font-size: 20px;
    font-weight: bold;
}

.faux_row small {
    font-size: 15px;
    margin-top: 4px;
}

.faux_row sup, .faux_row sub {
    font-size: 10px;
}

.faux_row sup { margin-bottom: 8px; }
.faux_row sub { margin-top: 10px; }

.faux_row .dirs {
    gap: 11px;
    margin: 0 23px 0 16px;
}

.appear_sec {
    padding-top: 17px;
}

.fill_label {
    margin: 20px 0 13px 13px;
}

.fill_row {
    display: flex;
    gap: 18px;
    padding-left: 13px;
}

.check {
    position: relative;
    height: 17px;
    margin-top: 3px;
}

.check input {
    display: block;
    width: 17px;
    height: 17px;
    appearance: none;
    background: #909090;
}

.check svg {
    position: absolute;
    left: 0;
    top: 0;
}

.fill_color {
    width: 50px;
    height: 20px;
    margin-right: -4px;
    background: #fff;
}

.fill_row > svg {
    margin-top: 4px;
}

/* Status bar */
.status_bar {
    height: 25px;
    flex: none;
    padding: 4px 3px;
    background: #262626;
}

/* Taskbar */
.taskbar {
    display: flex;
    height: 60px;
    flex: none;
    border-top: 1px solid #e8cfc8;
    background: linear-gradient(90deg, #fde2d8, #fdeadc 24%, #fcdcdc 40%, #fbe0ec 50%, #f7ded9 60%, #f8dcd6 85%, #fde5cf);
    color: #222;
    font-family: "Open Sans", "Noto Sans CJK JP", sans-serif;
}

.weather, .tray {
    display: flex;
    flex: 1;
}

.weather {
    gap: 4px;
    padding: 6px 0 0 24px;
}

.weather div {
    display: flex;
    flex-direction: column;
    padding-top: 2px;
}

.apps {
    display: flex;
    align-items: center;
    padding: 0 0 2px 16px;
}

.start {
    margin-right: 18px;
}

.search {
    display: flex;
    align-items: center;
    width: 272px;
    height: 39px;
    margin-right: 6px;
    padding: 0 3px 0 13px;
    border: 1px solid #e4cfcd;
    border-radius: 20px;
    background: #fdf4f3;
}

.search input {
    flex: 1;
    min-width: 0;
    margin-left: 11px;
    font-size: 17px;
}

.search input::placeholder {
    color: #5a5a5a;
}

.app {
    position: relative;
    width: 49px;
    height: 50px;
    margin: 0 3px;
    border-radius: 5px;
}

.run::after {
    content: "";
    position: absolute;
    bottom: 1px;
    width: 8px;
    height: 4px;
    border-radius: 2px;
    background: #8f807d;
}

.line_app { background: #fde8e9; }
.line_app::after { background: #c42b1c; }
.pr_app { background: #fdf1ee; }
.pr_app::after { width: 20px; background: #0a78d4; }

.badge {
    position: absolute;
    right: 2px;
    top: 4px;
    width: 20px;
    height: 20px;
    border-radius: 50%;
    background: #0a78d4;
    color: #fff;
    line-height: 20px;
}

.badge.person {
    background: #6b4a42;
    font-size: 9px;
}

.tray {
    align-items: center;
    justify-content: flex-end;
    gap: 25px;
    padding: 0 27px 4px 0;
}

.tray_sys {
    display: flex;
    align-items: center;
    gap: 11px;
    margin-right: -5px;
}

.clock {
    display: flex;
    flex-direction: column;
    text-align: right;
    font-size: 14px;
}

.clock + svg {
    margin-left: -13px;
}
```
FILE: script.js
```javascript
// Draws the two-channel waveform inside each audio clip
document.querySelectorAll(".wave").forEach(function (svg) {
    let width = Number(svg.getAttribute("width"));
    let max = Number(svg.dataset.max);
    let seed = Number(svg.dataset.seed);
    let bars = "";

    for (let x = 0; x < width; x += 2) {
        seed = (seed * 73 + 41) % 997;
        let h = 1 + seed % max;
        bars += "M" + (x + 1) + " 14v-" + h + "M" + (x + 1) + " 29v-" + h;
    }
    svg.innerHTML = '<path d="' + bars + '" stroke="currentColor" stroke-width="2"/>' +
        '<path d="M0 14.5h' + width + 'M0 29.5h' + width + '" stroke="#8aa6b8" stroke-width="1"/>';
});
```
